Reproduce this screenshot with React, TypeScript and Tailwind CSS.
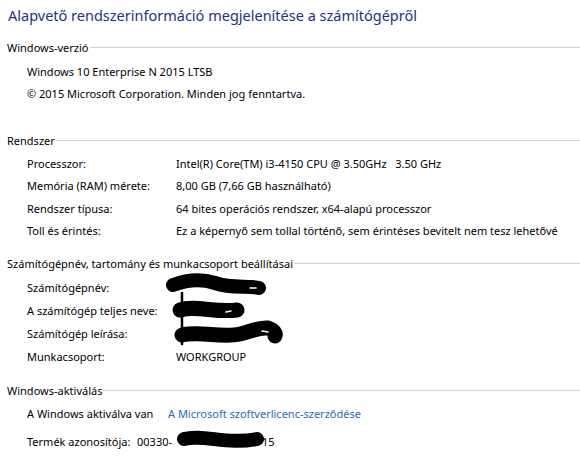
import React from 'react';

const font = { fontFamily: '"Noto Sans", "Open Sans", sans-serif' };

function Heading({ title, className = '' }: { title: string; className?: string }) {
  return (
    <div className={`flex items-center h-[20px] pl-[7px] ${className}`}>
      <span className="whitespace-nowrap">{title}</span>
      <div className="flex-1 h-px ml-px bg-[#d4d4d4]" />
    </div>
  );
}

function Row({ label, value, className = '' }: { label: string; value?: React.ReactNode; className?: string }) {
  return (
    <div className={`flex items-center h-[22.5px] pl-[27px] ${className}`}>
      <span className="w-[149px] shrink-0 whitespace-nowrap">{label}</span>
      <span className="whitespace-pre">{value}</span>
    </div>
  );
}

export default function App() {
  return (
    <div
      className="relative w-[580px] h-[475px] overflow-hidden bg-white text-[11px] text-black leading-none"
      style={font}
    >
      {/* title */}
      <div className="h-[30px] flex items-center pl-[8px] text-[14.5px] text-[#1e3287] whitespace-nowrap">
        Alapvető rendszerinformáció megjelenítése a számítógépről
      </div>

      {/* Windows-verzió */}
      <Heading title="Windows-verzió" className="mt-[7px]" />
      <div className="mt-[3px]">
        <div className="flex items-center h-[22.5px] pl-[27px]">Windows 10 Enterprise N 2015 LTSB</div>
        <div className="flex items-center h-[22.5px] pl-[27px]">© 2015 Microsoft Corporation. Minden jog fenntartva.</div>
      </div>

      {/* Rendszer */}
      <Heading title="Rendszer" className="mt-[25px]" />
      <div className="mt-[2px]">
        <Row label="Processzor:" value="Intel(R) Core(TM) i3-4150 CPU @ 3.50GHz   3.50 GHz" />
        <Row label="Memória (RAM) mérete:" value="8,00 GB (7,66 GB használható)" />
        <Row label="Rendszer típusa:" value="64 bites operációs rendszer, x64-alapú processzor" />
        <Row label="Toll és érintés:" value="Ez a képernyő sem tollal történő, sem érintéses bevitelt nem tesz lehetővé" />
      </div>

      {/* Számítógépnév */}
      <Heading title="Számítógépnév, tartomány és munkacsoport beállításai" className="mt-[11px]" />
      <div className="mt-[2.5px]">
        <Row label="Számítógépnév:" className="h-[23px]" />
        <Row label="A számítógép teljes neve:" className="h-[23px]" />
        <Row label="Számítógép leírása:" className="h-[23px]" />
        <Row label="Munkacsoport:" value="WORKGROUP" className="h-[23px]" />
      </div>

      {/* Windows-aktiválás */}
      <Heading title="Windows-aktiválás" className="mt-[12.5px]" />
      <div className="mt-[2px] flex items-center h-[22.5px] pl-[27px] whitespace-nowrap">
        <span className="w-[141px] shrink-0">A Windows aktiválva van</span>
        <span className="text-[#2b6cb8]">A Microsoft szoftverlicenc-szerződése</span>
      </div>
      <div className="mt-[6px] flex items-center h-[22.5px] pl-[27px] whitespace-nowrap">
        <span className="w-[110px] shrink-0">Termék azonosítója:</span>
        <span>00330-</span>
        <span className="inline-block w-[90px]" />
        <span>15</span>
      </div>

      {/* redaction marks */}
      <svg className="absolute left-0 top-0 pointer-events-none" width="580" height="475" viewBox="0 0 580 475">
        <g fill="none" stroke="#000" strokeLinecap="round" strokeLinejoin="round">
          <path d="M173 285 C186 280 200 278 215 283 C232 289 248 285 259 288" strokeWidth="14" />
          <path d="M180 310 C196 305 216 313 237 310" strokeWidth="15" />
          <path d="M182 335 C200 331 222 338 240 334 C252 331 260 327 268 328 C274 330 276 333 275 336" strokeWidth="15" />
          <path d="M182 293 L182 344" strokeWidth="2.5" />
          <path d="M184 439 C203 434 228 445 257 439" strokeWidth="14" />
        </g>
        <g stroke="#fff" strokeLinecap="round" strokeWidth="1.5">
          <path d="M250 288 L256 288" />
          <path d="M226 312 L231 311" />
          <path d="M262 331 L268 332" />
        </g>
      </svg>
    </div>
  );
}
